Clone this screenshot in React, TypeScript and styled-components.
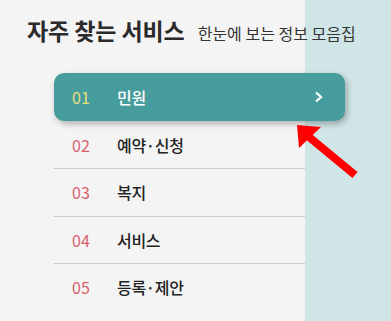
import { FC } from 'react';
import styled, { createGlobalStyle } from 'styled-components';

const GlobalStyle = createGlobalStyle`
    html, body {
        margin: 0;
        padding: 0;
    }
    body {
        font-family: "Noto Sans CJK KR", "Noto Sans", sans-serif;
        background: linear-gradient(to right, #f4f4f4 305px, #d0e5e6 305px);
    }
`

const Page = styled.div`
    position: relative;
    width: 391px;
    height: 321px;
    overflow: hidden;
`

const Header = styled.div`
    display: flex;
    align-items: baseline;
    gap: 13px;
    padding: 15px 0 0 27px;
    height: 73px;
    box-sizing: border-box;
`

const Title = styled.h2`
    margin: 0;
    font-size: 23px;
    font-weight: 700;
    color: #2b2b2b;
    line-height: 30px;
    letter-spacing: -0.1px;
`

const SubTitle = styled.span`
    font-size: 16px;
    color: #333;
    letter-spacing: 0;
`

const MenuList = styled.ul`
    list-style: none;
    margin: 0 0 0 54px;
    padding: 0;
    width: 251px;
`

const MenuItem = styled.li<{ $active?: boolean }>`
    display: flex;
    align-items: center;
    height: ${p => p.$active ? '48px' : '47.5px'};
    padding-left: 18px;
    box-sizing: border-box;
    border-top: ${p => p.$active ? 'none' : '1px solid #cacaca'};
    background: ${p => p.$active ? '#479d9d' : 'transparent'};
    border-radius: ${p => p.$active ? '10px' : '0'};
    box-shadow: ${p => p.$active ? '2px 3px 6px rgba(0, 0, 0, 0.28)' : 'none'};
    margin-right: ${p => p.$active ? '-40px' : '0'};

    &:first-child + & {
        border-top: none;
        height: 47px;
    }
`

const ItemNumber = styled.span<{ $active?: boolean }>`
    width: 45px;
    font-size: 16px;
    color: ${p => p.$active ? '#e9df7e' : '#d9606e'};
`

const ItemLabel = styled.span<{ $active?: boolean }>`
    flex: 1;
    font-size: 16px;
    font-weight: 500;
    color: ${p => p.$active ? '#ffffff' : '#222'};
    letter-spacing: -0.3px;
`

const Chevron = styled.svg`
    margin-right: 22px;
`

const Pointer = styled.svg`
    position: absolute;
    left: 290px;
    top: 118px;
`

const items = [
    { no: '01', label: '민원' },
    { no: '02', label: '예약·신청' },
    { no: '03', label: '복지' },
    { no: '04', label: '서비스' },
    { no: '05', label: '등록·제안' },
];

const App: FC = () => {
    return (
        <>
            <GlobalStyle />
            <Page>
                <Header>
                    <Title>자주 찾는 서비스</Title>
                    <SubTitle>한눈에 보는 정보 모음집</SubTitle>
                </Header>
                <MenuList>
                    {items.map((item, i) => (
                        <MenuItem key={item.no} $active={i === 0}>
                            <ItemNumber $active={i === 0}>{item.no}</ItemNumber>
                            <ItemLabel $active={i === 0}>{item.label}</ItemLabel>
                            {i === 0 && (
                                <Chevron width="9" height="12" viewBox="0 0 9 12">
                                    <polyline points="2,1.5 7,6 2,10.5" fill="none" stroke="#fff" strokeWidth="2.2" />
                                </Chevron>
                            )}
                        </MenuItem>
                    ))}
                </MenuList>
                {/* red pointer arrow */}
                <Pointer width="80" height="70" viewBox="0 0 80 70">
                    <line x1="19" y1="19" x2="65" y2="57" stroke="#ff0000" strokeWidth="8" />
                    <polygon points="7,7 31,9 9,30" fill="#ff0000" />
                </Pointer>
            </Page>
        </>
    )
}

export default App;
